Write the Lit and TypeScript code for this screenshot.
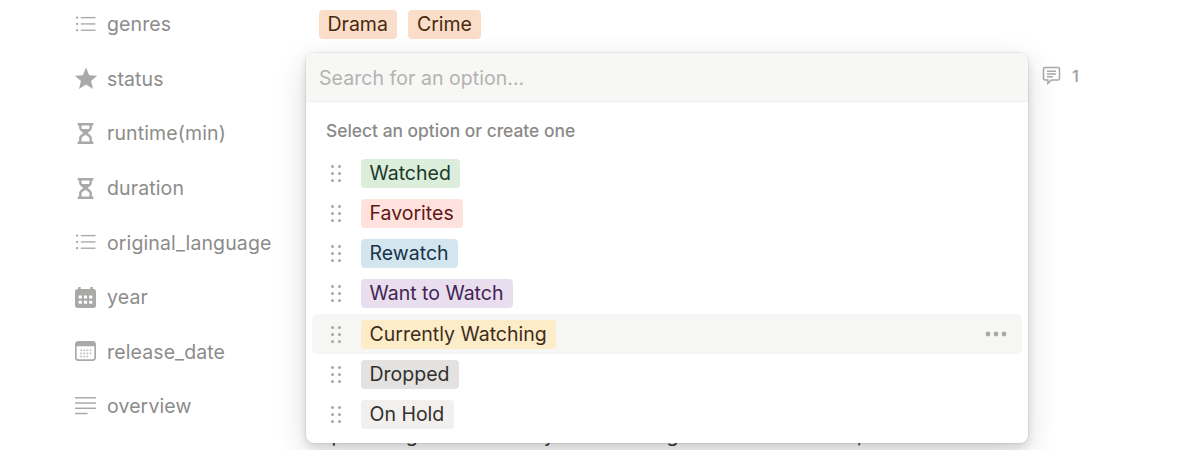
import { LitElement, html, css, svg } from "lit";
import { customElement } from "lit/decorators.js";

const listIcon = svg`<g fill="#a9a9a7"><circle cx="2" cy="3.5" r="1.1"/><circle cx="2" cy="9.5" r="1.1"/><circle cx="2" cy="15.5" r="1.1"/><rect x="5.5" y="2.8" width="14" height="1.3"/><rect x="5.5" y="8.8" width="14" height="1.3"/><rect x="5.5" y="14.8" width="14" height="1.3"/></g>`;
const starIcon = svg`<path fill="#a9a9a7" d="M10.5 -.5l3 7.3 7.6.6-5.8 5 1.9 7.6-6.7-4.2-6.7 4.2 1.9-7.6-5.8-5 7.6-.6z"/>`;
const hourIcon = svg`<path fill="#a9a9a7" fill-rule="evenodd" d="M2.5 0h15v2.4h-1.4v2.2c0 2.2-2.3 3.6-4 4.9 1.7 1.3 4 2.7 4 4.9v3.2h1.4V20h-15v-2.4h1.4v-3.2c0-2.2 2.3-3.6 4-4.9-1.7-1.3-4-2.7-4-4.9V2.4H2.5zM6.2 2.4v2c0 .5.2 .9.5 1.2h6.6c.3-.3.5-.7.5-1.2v-2zM10 11.2c-1.5 1.1-3.8 2.3-3.8 3.5v2.9h7.6v-2.9c0-1.2-2.3-2.4-3.8-3.5z"/>`;
const calFill = svg`<path fill="#a9a9a7" fill-rule="evenodd" d="M3 0h2.4v2h9.2V0H17v2h.6C19 2 20 3 20 4.4v13.2c0 1.4-1 2.4-2.4 2.4H2.4C1 20 0 19 0 17.6V4.4C0 3 1 2 2.4 2H3zM3.5 8v3h3V8zm5 0v3h3V8zm5 0v3h3V8zm-10 5v3h3v-3zm5 0v3h3v-3zm5 0v3h3v-3z"/>`;
const calIcon = svg`<path fill="#a9a9a7" fill-rule="evenodd" d="M3 0h14c1.7 0 3 1.3 3 3v13c0 1.7-1.3 3-3 3H3c-1.7 0-3-1.3-3-3V3c0-1.7 1.3-3 3-3zM1.6 5v11c0 .8.6 1.4 1.4 1.4h14c.8 0 1.4-.6 1.4-1.4V5z"/><g fill="#bdbdbb"><rect x="5" y="8" width="1.6" height="1.6"/><rect x="8" y="8" width="1.6" height="1.6"/><rect x="11" y="8" width="1.6" height="1.6"/><rect x="14" y="8" width="1.6" height="1.6"/><rect x="5" y="11" width="1.6" height="1.6"/><rect x="8" y="11" width="1.6" height="1.6"/><rect x="11" y="11" width="1.6" height="1.6"/><rect x="14" y="11" width="1.6" height="1.6"/><rect x="5" y="14" width="1.6" height="1.6"/><rect x="8" y="14" width="1.6" height="1.6"/><rect x="11" y="14" width="1.6" height="1.6"/></g>`;
const textIcon = svg`<g fill="#a9a9a7"><rect x="0" y="1" width="20" height="1.4"/><rect x="0" y="6" width="20" height="1.4"/><rect x="0" y="11" width="20" height="1.4"/><rect x="0" y="16" width="12" height="1.4"/></g>`;

const fields = [
  { name: "genres", icon: listIcon },
  { name: "status", icon: starIcon },
  { name: "runtime(min)", icon: hourIcon },
  { name: "duration", icon: hourIcon },
  { name: "original_language", icon: listIcon },
  { name: "year", icon: calFill },
  { name: "release_date", icon: calIcon },
  { name: "overview", icon: textIcon },
];

const options = [
  { label: "Watched", bg: "#dbeddb", fg: "#1c3829" },
  { label: "Favorites", bg: "#ffe2dd", fg: "#5d1715" },
  { label: "Rewatch", bg: "#d3e5ef", fg: "#183347" },
  { label: "Want to Watch", bg: "#e8deee", fg: "#412454" },
  { label: "Currently Watching", bg: "#fdecc8", fg: "#402c1b", hover: true },
  { label: "Dropped", bg: "#e3e2e0", fg: "#32302c" },
  { label: "On Hold", bg: "#f1f0ef", fg: "#32302c" },
];

@customElement("app-root")
export class AppRoot extends LitElement {
  static styles = css`
    :host {
      display: block;
      position: relative;
      width: 1200px;
      height: 450px;
      overflow: hidden;
      background: #fff;
      font-family: Inter, "Liberation Sans", sans-serif;
      font-size: 19.5px;
    }
    .rows {
      display: flex;
      flex-direction: column;
      padding: 0 0 0 75px;
      margin-top: -3px;
    }
    .row {
      display: flex;
      align-items: center;
      height: 54.6px;
      flex: none;
    }
    .label {
      display: flex;
      align-items: center;
      gap: 11px;
      width: 244px;
      flex: none;
      color: #8c8c8a;
      letter-spacing: 0.12px;
    }
    .label svg { width: 21px; height: 21px; flex: none; overflow: visible; }
    .tags { display: flex; gap: 11px; }
    .tag {
      display: inline-flex;
      align-items: center;
      height: 29px;
      padding: 0 9.5px 0 8.5px;
      border-radius: 4px;
      white-space: nowrap;
      line-height: 29px;
    }
    .comment {
      display: flex;
      align-items: center;
      gap: 11px;
      margin-left: 723px;
      margin-top: -6px;
      color: #a0a09e;
      font-size: 16.5px;
      font-weight: 500;
    }
    .comment svg { width: 19px; height: 19px; flex: none; }
    .body-text {
      position: absolute;
      left: 319px;
      top: 423px;
      color: #37352f;
      white-space: nowrap;
      font-size: 19.5px;
    }
    .panel {
      position: absolute;
      left: 306px;
      top: 53px;
      width: 722px;
      height: 390px;
      box-sizing: border-box;
      background: #fff;
      border-radius: 8px;
      overflow: hidden;
      box-shadow: 0 0 0 1px rgba(15, 15, 15, 0.05), 0 4px 10px rgba(15, 15, 15, 0.12), 0 10px 32px rgba(15, 15, 15, 0.14);
    }
    .search {
      height: 49px;
      box-sizing: border-box;
      padding: 2px 13px 0;
      display: flex;
      align-items: center;
      background: #f7f7f5;
      border-bottom: 1px solid #eeeeec;
      color: #b3b3b1;
      letter-spacing: 0.05px;
    }
    .hint {
      padding: 19px 20px 0;
      font-size: 17.4px;
      font-weight: 500;
      color: #8a8a88;
      line-height: 20px;
    }
    .list {
      display: flex;
      flex-direction: column;
      padding: 6px 6px 0;
      margin-top: 6px;
    }
    .opt {
      display: flex;
      align-items: center;
      height: 40.25px;
      flex: none;
      border-radius: 5px;
      padding-left: 19px;
      gap: 20px;
    }
    .opt.hover { background: #f6f6f5; }
    .grip { width: 10px; height: 17px; flex: none; overflow: visible; }
    .more { width: 22px; height: 6px; margin-left: auto; margin-right: 15px; flex: none; }
  `;

  render() {
    return html`
      <div class="rows">
        ${fields.map(
          (f, i) => html`<div class="row">
            <div class="label"><svg viewBox="0 0 20 20">${f.icon}</svg><span>${f.name}</span></div>
            ${i === 0
              ? html`<div class="tags">
                  <span class="tag" style="background:#fadec9;color:#49290e">Drama</span>
                  <span class="tag" style="background:#fadec9;color:#49290e">Crime</span>
                </div>`
              : ""}
            ${i === 1
              ? html`<div class="comment">
                  <svg viewBox="0 0 19 19"><path fill="none" stroke="#a9a9a7" stroke-width="1.5" d="M3 1.5h13c.8 0 1.5.7 1.5 1.5v9.5c0 .8-.7 1.5-1.5 1.5H9.5l-3.6 3.4V14H3c-.8 0-1.5-.7-1.5-1.5V3c0-.8.7-1.5 1.5-1.5z"/><path stroke="#a9a9a7" stroke-width="1.4" d="M5 5.2h9M5 8h9M5 10.8h6"/></svg>
                  <span>1</span>
                </div>`
              : ""}
          </div>`
        )}
      </div>
      <div class="body-text">Splintering under a heavy and the weight of the old crimes,</div>
      <div class="panel">
        <div class="search">Search for an option...</div>
        <div class="hint">Select an option or create one</div>
        <div class="list">
          ${options.map(
            (o) => html`<div class="opt ${o.hover ? "hover" : ""}">
              <svg class="grip" viewBox="0 0 10 17"><g fill="#a9a9a7">
                <circle cx="1.5" cy="1.5" r="1.5"/><circle cx="8.5" cy="1.5" r="1.5"/>
                <circle cx="1.5" cy="8.5" r="1.5"/><circle cx="8.5" cy="8.5" r="1.5"/>
                <circle cx="1.5" cy="15.5" r="1.5"/><circle cx="8.5" cy="15.5" r="1.5"/></g></svg>
              <span class="tag" style="background:${o.bg};color:${o.fg}">${o.label}</span>
              ${o.hover
                ? html`<svg class="more" viewBox="0 0 22 6"><g fill="#a9a9a7"><circle cx="3" cy="3" r="2.4"/><circle cx="11" cy="3" r="2.4"/><circle cx="19" cy="3" r="2.4"/></g></svg>`
                : ""}
            </div>`
          )}
        </div>
      </div>
    `;
  }
}
